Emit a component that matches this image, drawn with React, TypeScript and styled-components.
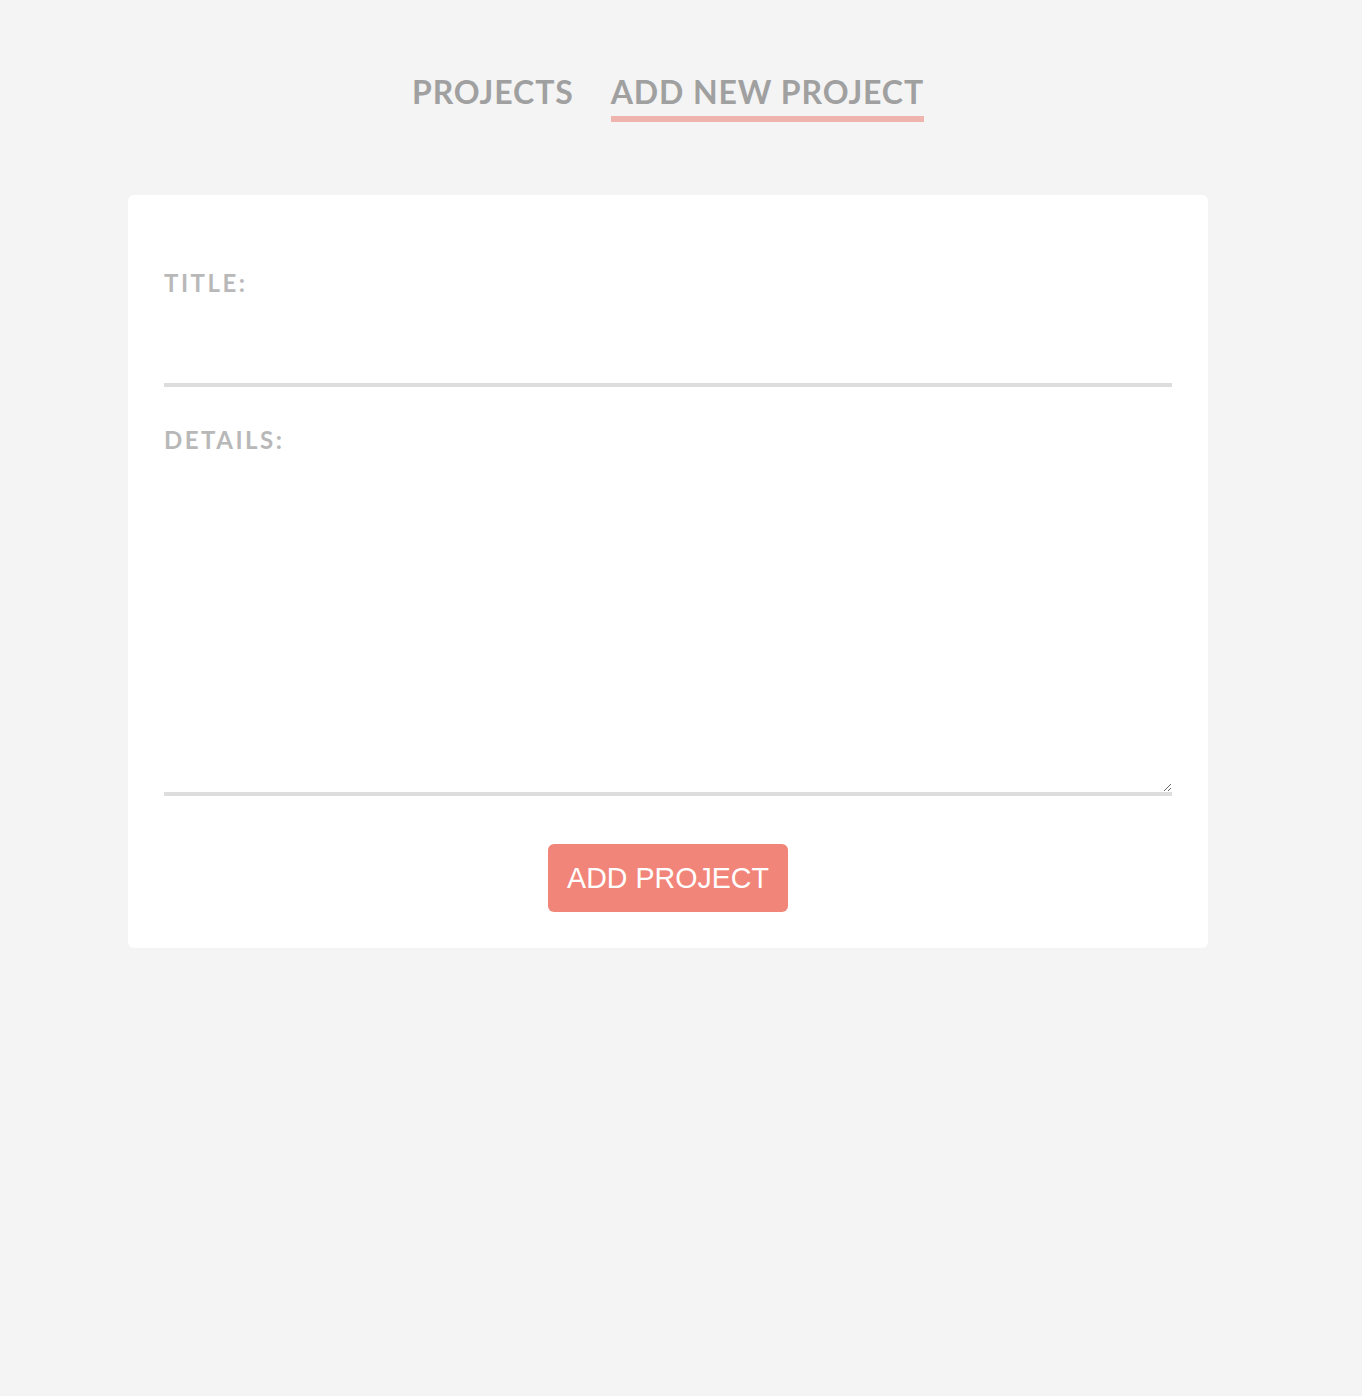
import React from "react";
import styled, { createGlobalStyle } from "styled-components";

const GlobalStyle = createGlobalStyle`
  html, body {
    margin: 0;
    padding: 0;
    background: #f4f4f4;
    font-family: Lato, "Open Sans", sans-serif;
  }
`;

const Page = styled.div`
  box-sizing: border-box;
  min-height: 1396px;
  padding-right: 26px;
  display: flex;
  flex-direction: column;
  align-items: center;
`;

const Nav = styled.nav`
  display: flex;
  gap: 37px;
  margin-top: 73px;
`;

const NavItem = styled.a<{ $active?: boolean }>`
  font-family: Lato, sans-serif;
  font-weight: 700;
  font-size: 32px;
  line-height: 38px;
  letter-spacing: 0.9px;
  color: #a0a0a0;
  text-decoration: none;
  padding-bottom: 5px;
  border-bottom: 6px solid ${(p) => (p.$active ? "#f0b4ae" : "transparent")};
  cursor: pointer;
`;

const Card = styled.form`
  box-sizing: border-box;
  width: 1080px;
  margin-top: 73px;
  background: #fff;
  border-radius: 6px;
  padding: 73px 36px 36px;
  display: flex;
  flex-direction: column;
`;

const Label = styled.label`
  font-family: Lato, sans-serif;
  font-weight: 700;
  font-size: 24px;
  line-height: 29px;
  letter-spacing: 2.5px;
  color: #b8b8b8;
`;

const TitleInput = styled.input`
  box-sizing: border-box;
  height: 90px;
  border: none;
  border-bottom: 4px solid #dddddd;
  outline: none;
  font-size: 24px;
  font-family: Lato, sans-serif;
  color: #666;
  margin-bottom: 38px;
  background: transparent;
`;

const DetailsArea = styled.textarea`
  box-sizing: border-box;
  height: 342px;
  border: none;
  border-bottom: 4px solid #dddddd;
  outline: none;
  font-size: 24px;
  font-family: Lato, sans-serif;
  color: #666;
  resize: vertical;
  background: transparent;
`;

const SubmitButton = styled.button`
  align-self: center;
  margin-top: 48px;
  height: 68px;
  padding: 0 19px;
  border: none;
  border-radius: 6px;
  background: #f28579;
  color: #fff;
  font-family: "Liberation Sans", Arial, sans-serif;
  font-size: 28.6px;
  cursor: pointer;
`;

export default function App() {
  return (
    <>
      <GlobalStyle />
      <Page>
        <Nav>
          <NavItem>PROJECTS</NavItem>
          <NavItem $active>ADD NEW PROJECT</NavItem>
        </Nav>
        <Card onSubmit={(e) => e.preventDefault()}>
          <Label htmlFor="title">TITLE:</Label>
          <TitleInput id="title" type="text" />
          <Label htmlFor="details">DETAILS:</Label>
          <DetailsArea id="details" />
          <SubmitButton type="submit">ADD PROJECT</SubmitButton>
        </Card>
      </Page>
    </>
  );
}
